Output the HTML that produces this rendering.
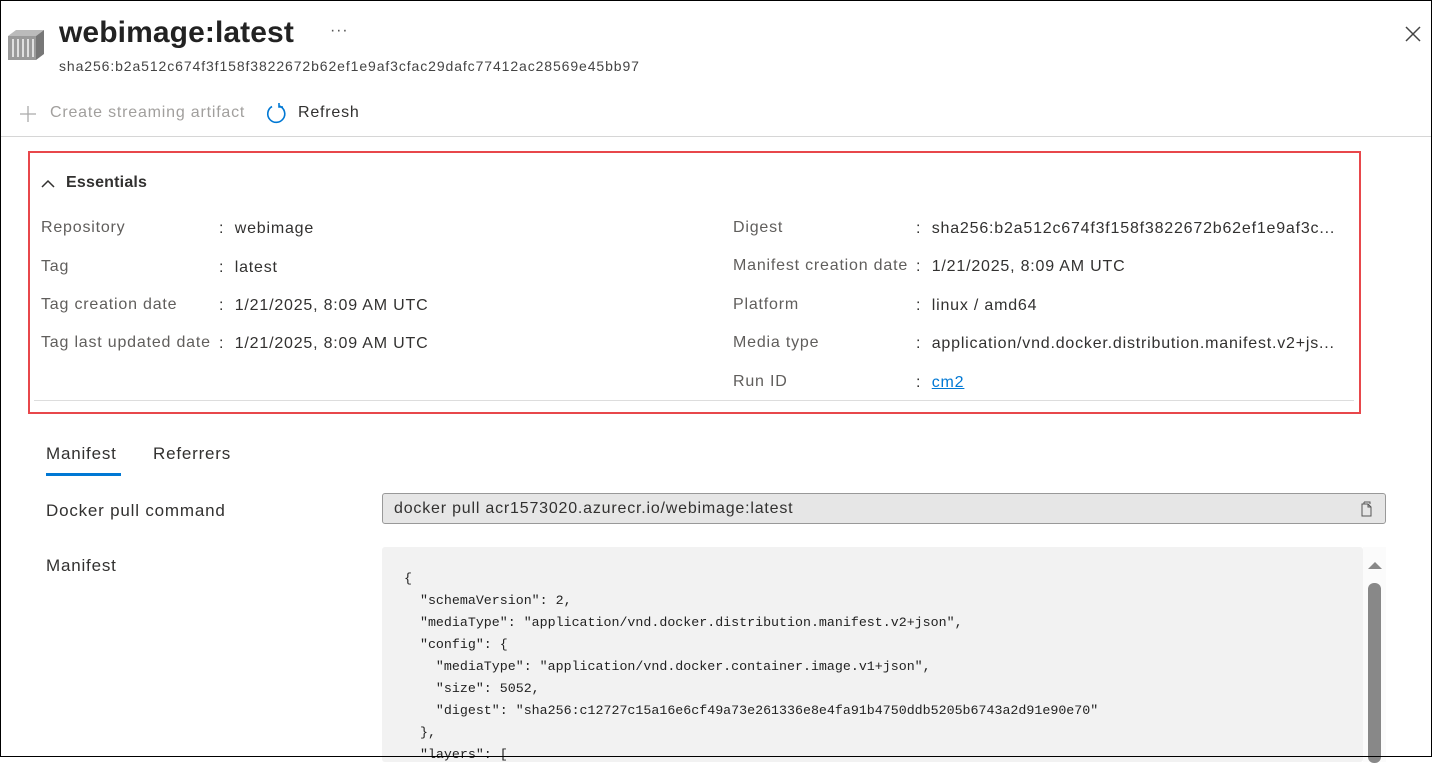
<!DOCTYPE html>
<html><head><style>
*{margin:0;padding:0;box-sizing:border-box}
body{width:1432px;height:757px;overflow:hidden;background:#fff;font-family:"Liberation Sans",sans-serif;color:#323130;position:relative;letter-spacing:0.8px}
.frame{position:absolute;inset:0;border:1px solid #000;pointer-events:none;z-index:9}
.a{position:absolute;white-space:nowrap}
.lab{color:#605e5c;font-size:16px}
.val{color:#323130;font-size:16px}
.code{font-family:"Liberation Mono",monospace;font-size:13.3px;color:#222;line-height:22px;white-space:pre;letter-spacing:0}
</style></head><body>
<div class="frame"></div>
<svg class="a" style="left:6px;top:28px" width="40" height="34" viewBox="0 0 40 34">
<polygon points="2,8 30,8 38,2 10,2" fill="#bbb"/>
<rect x="2" y="8" width="28" height="24" fill="#9a9a9a"/>
<polygon points="30,8 38,2 38,26 30,32" fill="#777"/>
<g stroke="#e0e0e0" stroke-width="2"><line x1="7" y1="11" x2="7" y2="29"/><line x1="12" y1="11" x2="12" y2="29"/><line x1="17" y1="11" x2="17" y2="29"/><line x1="22" y1="11" x2="22" y2="29"/><line x1="27" y1="11" x2="27" y2="29"/></g>
</svg>
<div class="a" style="left:59px;top:16px;font-size:30px;font-weight:bold;color:#222;letter-spacing:0.1px">webimage:latest</div>
<div class="a" style="left:330px;top:22px;font-size:16px;color:#555">···</div>
<div class="a" style="left:59px;top:58px;font-size:14px;color:#444;letter-spacing:0.9px">sha256:b2a512c674f3f158f3822672b62ef1e9af3cfac29dafc77412ac28569e45bb97</div>
<svg class="a" style="left:1404px;top:25px" width="18" height="18"><path d="M2 2L16 16M16 2L2 16" stroke="#444" stroke-width="1.5"/></svg>
<svg class="a" style="left:18px;top:104px" width="20" height="20"><path d="M10 2V18M2 10H18" stroke="#aaa" stroke-width="1.3"/></svg>
<div class="a" style="left:50px;top:104px;font-size:16px;color:#a19f9d">Create streaming artifact</div>
<svg class="a" style="left:264px;top:102px" width="24" height="24"><path d="M8 4.5A8.5 8.5 0 1 0 15.5 4" fill="none" stroke="#0078d4" stroke-width="1.6"/><path d="M15 1V5H19" fill="none" stroke="#0078d4" stroke-width="1.6"/></svg>
<div class="a" style="left:298px;top:104px;font-size:16px;color:#323130">Refresh</div>
<div class="a" style="left:1px;top:136px;width:1430px;height:1px;background:#d6d6d6"></div>
<div class="a" style="left:28px;top:151px;width:1333px;height:263px;border:2px solid #e8474b"></div>
<svg class="a" style="left:40px;top:177px" width="16" height="14"><path d="M2 10L8 4L14 10" fill="none" stroke="#323130" stroke-width="1.5"/></svg>
<div class="a" style="left:66px;top:174px;font-size:16px;font-weight:bold;color:#323130;letter-spacing:0.2px">Essentials</div>
<div class="a" style="left:34px;top:400px;width:1320px;height:1px;background:#ddd"></div>
<div class="a lab" style="left:41px;top:219px">Repository</div><div class="a val" style="left:219px;top:220px">:&nbsp; webimage</div>
<div class="a lab" style="left:41px;top:258px">Tag</div><div class="a val" style="left:219px;top:259px">:&nbsp; latest</div>
<div class="a lab" style="left:41px;top:296px">Tag creation date</div><div class="a val" style="left:219px;top:297px">:&nbsp; 1/21/2025, 8:09 AM UTC</div>
<div class="a lab" style="left:41px;top:334px">Tag last updated date</div><div class="a val" style="left:219px;top:335px">:&nbsp; 1/21/2025, 8:09 AM UTC</div>
<div class="a lab" style="left:733px;top:219px">Digest</div><div class="a val" style="left:916px;top:220px">:&nbsp; sha256:b2a512c674f3f158f3822672b62ef1e9af3c...</div>
<div class="a lab" style="left:733px;top:257px">Manifest creation date</div><div class="a val" style="left:916px;top:258px">:&nbsp; 1/21/2025, 8:09 AM UTC</div>
<div class="a lab" style="left:733px;top:296px">Platform</div><div class="a val" style="left:916px;top:297px">:&nbsp; linux / amd64</div>
<div class="a lab" style="left:733px;top:334px">Media type</div><div class="a val" style="left:916px;top:335px">:&nbsp; application/vnd.docker.distribution.manifest.v2+js...</div>
<div class="a lab" style="left:733px;top:373px">Run ID</div><div class="a val" style="left:916px;top:374px">:&nbsp; <span style="color:#0078d4;text-decoration:underline">cm2</span></div>
<div class="a" style="left:46px;top:444px;font-size:17px;color:#323130">Manifest</div>
<div class="a" style="left:46px;top:473px;width:75px;height:3px;background:#0078d4"></div>
<div class="a" style="left:153px;top:444px;font-size:17px;color:#323130">Referrers</div>
<div class="a" style="left:46px;top:501px;font-size:17px">Docker pull command</div>
<div class="a" style="left:382px;top:493px;width:1004px;height:31px;background:#e6e6e6;border:1px solid #999;border-radius:3px"></div>
<div class="a" style="left:394px;top:500px;font-size:16px;color:#323130">docker pull acr1573020.azurecr.io/webimage:latest</div>
<svg class="a" style="left:1360px;top:500px" width="18" height="18"><path d="M4 2H10L10 4M2 4H8L11 7V16H2Z M8 4V7H11" fill="none" stroke="#555" stroke-width="1"/><path d="M4 2V4" stroke="#555"/></svg>
<div class="a" style="left:46px;top:556px;font-size:17px">Manifest</div>
<div class="a" style="left:382px;top:547px;width:981px;height:215px;background:#f2f2f2;border-radius:3px"></div>
<div class="a" style="left:1363px;top:547px;width:23px;height:215px;background:#fbfbfb"></div>
<svg class="a" style="left:1366px;top:560px" width="18" height="10"><polygon points="2,9 9,2 16,9" fill="#888"/></svg>
<div class="a" style="left:1368px;top:583px;width:13px;height:180px;background:#888;border-radius:6px"></div>
<div class="a code" style="left:404px;top:568px">{
  "schemaVersion": 2,
  "mediaType": "application/vnd.docker.distribution.manifest.v2+json",
  "config": {
    "mediaType": "application/vnd.docker.container.image.v1+json",
    "size": 5052,
    "digest": "sha256:c12727c15a16e6cf49a73e261336e8e4fa91b4750ddb5205b6743a2d91e90e70"
  },
  "layers": [</div>
</body></html>
